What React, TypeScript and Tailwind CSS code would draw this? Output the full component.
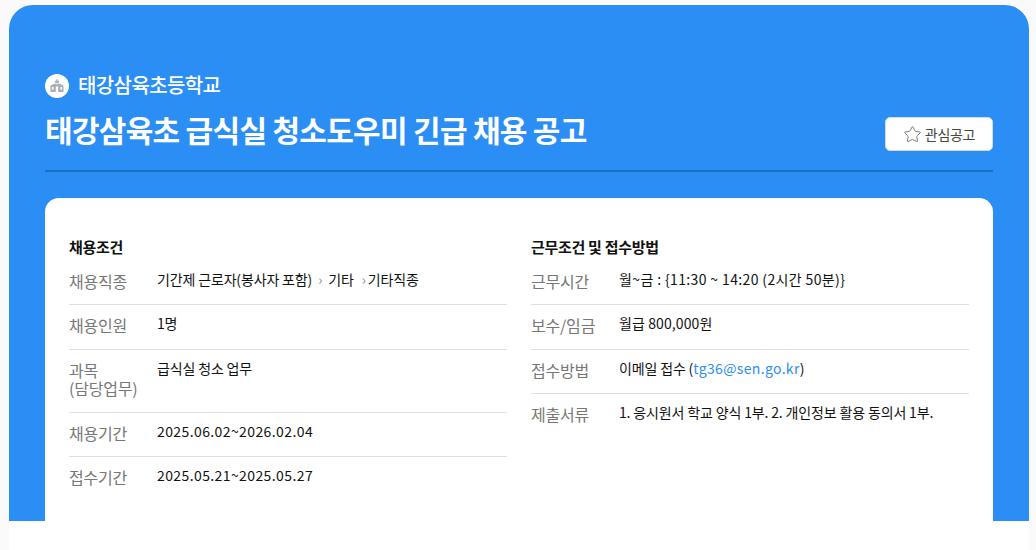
import { Star } from "lucide-react";
import { ReactNode } from "react";

interface RowProps {
  label: ReactNode;
  children: ReactNode;
  last?: boolean;
}

function Row({ label, children, last }: RowProps) {
  return (
    <div className={`flex pt-[9px] pb-[14px] ${last ? "" : "border-b border-[#dfdfdf]"}`}>
      <div className="w-[88px] shrink-0 text-[16px] leading-[18.5px] text-[#777777] pt-[2px] tracking-[-0.2px]">{label}</div>
      <div className="text-[14px] leading-[18.5px] text-[#111111] tracking-[-0.15px]">{children}</div>
    </div>
  );
}

function SchoolIcon() {
  return (
    <svg viewBox="0 0 16 16" className="w-4 h-4" fill="#a9afb7">
      <path d="M7.5 1h1v1.4l1.6.7v1.5L8 5.6 5.9 4.6V3.1l1.6-.7z" />
      <path d="M1.5 7.5 6 5.6l2 1 2-1 4.5 1.9V14h-13z" />
      <rect x="3" y="9" width="1.6" height="2.5" fill="#fff" />
      <rect x="6.8" y="8.5" width="2.4" height="5.5" fill="#fff" />
      <rect x="11.4" y="9" width="1.6" height="2.5" fill="#fff" />
    </svg>
  );
}

export default function App() {
  return (
    <div className="h-[550px] overflow-hidden bg-[#fafafa] pt-[5px] pl-[9px] pr-[7px] font-['Noto_Sans_CJK_KR','Noto_Sans',sans-serif]">
      <div className="h-[545px] bg-white rounded-t-[24px]">
        <div className="h-[516px] overflow-hidden bg-[#2a8ef5] rounded-t-[24px] px-[36px] pt-[68px]">
          <div className="flex items-center gap-[9px] h-[26px]">
            <span className="flex items-center justify-center w-6 h-6 rounded-full bg-white">
              <SchoolIcon />
            </span>
            <span className="text-[20px] leading-[26px] pb-[3px] font-medium text-white tracking-[-0.6px]">태강삼육초등학교</span>
          </div>
          <div className="mt-[8px] pb-[19px] flex items-center justify-between border-b-2 border-[#1a6fc9]">
            <h1 className="text-[30px] leading-[44px] font-bold text-white tracking-[-0.7px]">
              태강삼육초 급식실 청소도우미 긴급 채용 공고
            </h1>
            <button className="flex items-center justify-center gap-[3px] w-[108px] h-[34px] mt-[10px] rounded-[5px] bg-white border border-[#d5d9de] text-[14px] text-[#444444] tracking-[-0.3px]">
              <Star className="w-[19px] h-[19px] text-[#777777]" strokeWidth={1.2} />
              관심공고
            </button>
          </div>
          <div className="mt-[26px] h-[400px] rounded-t-[14px] bg-white p-[24px] pt-[36px] grid grid-cols-2 gap-[24px]">
            <div>
              <h2 className="text-[15px] leading-[25.5px] mb-[1px] font-bold text-[#111111] tracking-[-0.3px]">채용조건</h2>
              <Row label="채용직종">
                기간제 근로자(봉사자 포함)
                <span className="text-[#888888] ml-[6px] mr-[6px]">›</span>
                기타
                <span className="text-[#888888] ml-[8px] mr-[2px]">›</span>
                기타직종
              </Row>
              <Row label="채용인원">1명</Row>
              <Row label={<>과목<br />(담당업무)</>}>급식실 청소 업무</Row>
              <Row label="채용기간"><span className="tracking-[0.4px]">2025.06.02~2026.02.04</span></Row>
              <Row label="접수기간" last><span className="tracking-[0.4px]">2025.05.21~2025.05.27</span></Row>
            </div>
            <div>
              <h2 className="text-[15px] leading-[25.5px] mb-[1px] font-bold text-[#111111] tracking-[-0.3px]">근무조건 및 접수방법</h2>
              <Row label="근무시간"><span className="tracking-[0.37px]">월~금 : {"{11:30 ~ 14:20 (2시간 50분)}"}</span></Row>
              <Row label="보수/임금"><span className="tracking-[0.1px]">월급 800,000원</span></Row>
              <Row label="접수방법">
                이메일 접수 (<a className="text-[#2a8ef5] tracking-[0.35px]">tg36@sen.go.kr</a>)
              </Row>
              <Row label="제출서류" last>1. 응시원서 학교 양식 1부. 2. 개인정보 활용 동의서 1부.</Row>
            </div>
          </div>
        </div>
      </div>
    </div>
  );
}
